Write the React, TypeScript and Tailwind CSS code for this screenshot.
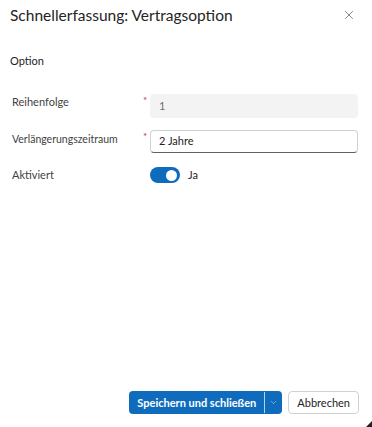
import { ChevronDown, X } from 'lucide-react';

export default function App() {
  return (
    <div
      className="w-[372px] h-[427px] flex flex-col bg-white text-[#242424] relative"
      style={{ fontFamily: 'Lato, "Noto Sans", sans-serif' }}
    >
      {/* Header */}
      <div className="flex items-center justify-between pl-[10px] pr-[16px] pt-[2px] h-[28px]">
        <h1 className="text-[15.5px] leading-[24px] font-normal">
          Schnellerfassung: Vertragsoption
        </h1>
        <X className="w-[14px] h-[14px] text-[#616161]" strokeWidth={1.3} />
      </div>

      {/* Section */}
      <div className="pl-[10px] mt-[25px] text-[11px] leading-[16px]">Option</div>

      {/* Form */}
      <div className="flex flex-col mt-[25px] pr-[14px]">
        <div className="flex items-start h-[24px]">
          <div className="w-[143px] pl-[12px] text-[11px] leading-[16px] text-[#424242]">Reihenfolge</div>
          <div className="w-[7px] text-[10px] leading-[12px] text-[#c4314b]">*</div>
          <div className="flex-1 h-[24px] rounded-[4px] bg-[#f3f3f3] flex items-center pl-[9px] text-[11px] text-[#707070]">
            1
          </div>
        </div>

        <div className="flex items-start h-[23px] mt-[12px]">
          <div className="w-[143px] pl-[12px] pt-[1px] text-[10.5px] leading-[16px] text-[#424242] whitespace-nowrap">
            Verlängerungszeitraum
          </div>
          <div className="w-[7px] text-[10px] leading-[12px] text-[#c4314b]">*</div>
          <div className="flex-1 h-[23px] rounded-[4px] border border-[#d1d1d1] border-b-[#616161] bg-white flex items-center pl-[8px] text-[11px] text-[#242424]">
            2 Jahre
          </div>
        </div>

        <div className="flex items-center h-[18px] mt-[13px]">
          <div className="w-[150px] pl-[12px] text-[11px] leading-[16px] text-[#424242]">Aktiviert</div>
          <div className="w-[30px] h-[16px] rounded-full bg-[#0f6cbd] flex items-center justify-end pr-[3px]">
            <div className="w-[11px] h-[11px] rounded-full bg-white" />
          </div>
          <span className="ml-[8px] text-[11px] leading-[16px]">Ja</span>
        </div>
      </div>

      {/* Footer */}
      <div className="mt-auto flex justify-end items-center gap-[6px] pr-[13px] pb-[13px]">
        <div className="flex h-[23px] rounded-[4px] bg-[#0f6cbd] text-white">
          <button className="px-[8px] text-[11px] font-bold leading-[23px] whitespace-nowrap">
            Speichern und schließen
          </button>
          <div className="w-px bg-[#ffffffb0] my-[1px]" />
          <div className="w-[17px] flex items-center justify-center">
            <ChevronDown className="w-[9px] h-[9px] text-[#c8dcf0]" strokeWidth={1.5} />
          </div>
        </div>
        <button className="h-[23px] px-[8px] rounded-[4px] border border-[#d1d1d1] bg-white text-[11px] leading-[21px] text-[#242424]">
          Abbrechen
        </button>
      </div>

      <div className="absolute right-0 bottom-0 w-0 h-0 border-l-[6px] border-l-transparent border-b-[6px] border-b-[#222]" />
    </div>
  );
}
